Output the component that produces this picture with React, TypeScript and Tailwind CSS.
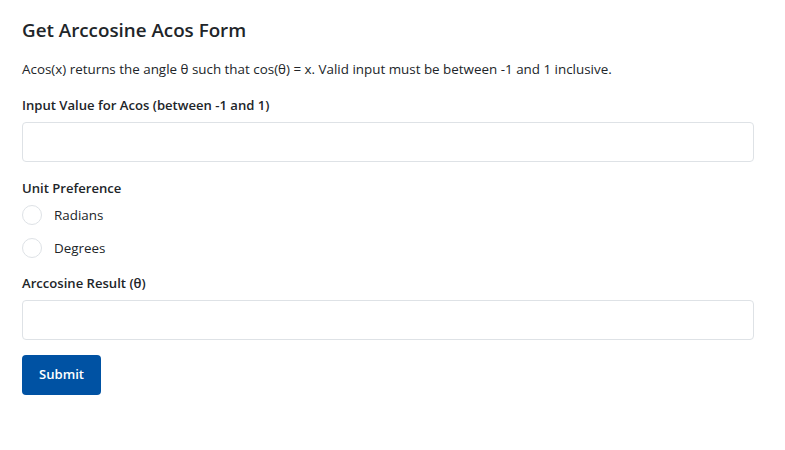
import React, { useState } from 'react';

export default function App() {
  const [unit, setUnit] = useState<'radians' | 'degrees' | ''>('');
  const [value, setValue] = useState('');

  return (
    <div className="min-h-[450px] bg-white text-[#212529]" style={{ fontFamily: '"Open Sans", "Noto Sans", sans-serif' }}>
      <div className="w-[732px] ml-[22px] pt-[17px]">
        <h1 className="text-[18.8px] font-semibold leading-[26px] text-[#212529]">Get Arccosine Acos Form</h1>

        <p className="mt-[16px] text-[13.4px] leading-[20px]">
          Acos(x) returns the angle θ such that cos(θ) = x. Valid input must be between -1 and 1 inclusive.
        </p>

        <label className="block mt-[16px] text-[13.1px] font-semibold leading-[20px]">
          Input Value for Acos (between -1 and 1)
        </label>
        <input
          value={value}
          onChange={(e) => setValue(e.target.value)}
          className="block mt-[7px] w-full h-[40px] rounded-[4px] border border-[#dee2e6] px-3 text-[13px] outline-none"
        />

        <div className="mt-[16px] text-[13.1px] font-semibold leading-[20px]">Unit Preference</div>
        <div className="mt-[7px] flex flex-col gap-[13px]">
          {[
            { id: 'radians', label: 'Radians' },
            { id: 'degrees', label: 'Degrees' },
          ].map((o) => (
            <label key={o.id} className="flex items-center gap-[12px] text-[13.4px] leading-[20px] cursor-pointer">
              <span
                onClick={() => setUnit(o.id as 'radians' | 'degrees')}
                className={`w-[20px] h-[20px] rounded-full border ${unit === o.id ? 'border-[#0052a3] border-[6px]' : 'border-[#dee2e6]'}`}
              ></span>
              {o.label}
            </label>
          ))}
        </div>

        <div className="mt-[15px] text-[13.1px] font-semibold leading-[20px]">Arccosine Result (θ)</div>
        <input
          readOnly
          className="block mt-[7px] w-full h-[40px] rounded-[4px] border border-[#dee2e6] px-3 text-[13px] outline-none"
        />

        <button className="mt-[15px] h-[40px] w-[79px] rounded-[4px] bg-[#0052a3] text-white text-[13.1px] font-semibold">
          Submit
        </button>
      </div>
    </div>
  );
}
